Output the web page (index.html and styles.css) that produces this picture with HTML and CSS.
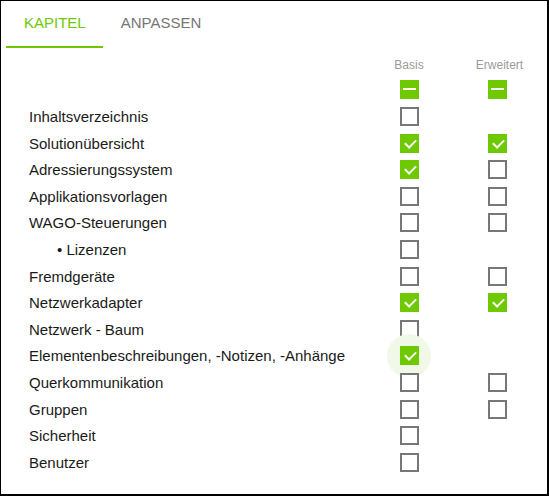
FILE: index.html
```html
<!DOCTYPE html>
<html lang="de">
<head>
    <meta charset="UTF-8">
    <title>Kapitel</title>
    <link rel="stylesheet" href="styles.css">
</head>
<body>
    <div class="frame">
        <div class="tabs">
            <div class="tab active">KAPITEL</div>
            <div class="tab">ANPASSEN</div>
        </div>

        <div class="chapters">
            <div class="row head">
                <span></span>
                <span class="col-title">Basis</span>
                <span class="col-title">Erweitert</span>
            </div>
            <div class="row">
                <span></span>
                <span class="cell"><span class="box mixed"></span></span>
                <span class="cell"><span class="box mixed"></span></span>
            </div>
            <div class="row">
                <span class="label">Inhaltsverzeichnis</span>
                <span class="cell"><span class="box"></span></span>
                <span class="cell"></span>
            </div>
            <div class="row">
                <span class="label">Solutionübersicht</span>
                <span class="cell"><span class="box on"></span></span>
                <span class="cell"><span class="box on"></span></span>
            </div>
            <div class="row">
                <span class="label">Adressierungssystem</span>
                <span class="cell"><span class="box on"></span></span>
                <span class="cell"><span class="box"></span></span>
            </div>
            <div class="row">
                <span class="label">Applikationsvorlagen</span>
                <span class="cell"><span class="box"></span></span>
                <span class="cell"><span class="box"></span></span>
            </div>
            <div class="row">
                <span class="label">WAGO-Steuerungen</span>
                <span class="cell"><span class="box"></span></span>
                <span class="cell"><span class="box"></span></span>
            </div>
            <div class="row">
                <span class="label sub">&bull; Lizenzen</span>
                <span class="cell"><span class="box"></span></span>
                <span class="cell"></span>
            </div>
            <div class="row">
                <span class="label">Fremdgeräte</span>
                <span class="cell"><span class="box"></span></span>
                <span class="cell"><span class="box"></span></span>
            </div>
            <div class="row">
                <span class="label">Netzwerkadapter</span>
                <span class="cell"><span class="box on"></span></span>
                <span class="cell"><span class="box on"></span></span>
            </div>
            <div class="row">
                <span class="label">Netzwerk - Baum</span>
                <span class="cell"><span class="box"></span></span>
                <span class="cell"></span>
            </div>
            <div class="row">
                <span class="label">Elementenbeschreibungen, -Notizen, -Anhänge</span>
                <span class="cell"><span class="ripple"></span><span class="box on"></span></span>
                <span class="cell"></span>
            </div>
            <div class="row">
                <span class="label">Querkommunikation</span>
                <span class="cell"><span class="box"></span></span>
                <span class="cell"><span class="box"></span></span>
            </div>
            <div class="row">
                <span class="label">Gruppen</span>
                <span class="cell"><span class="box"></span></span>
                <span class="cell"><span class="box"></span></span>
            </div>
            <div class="row">
                <span class="label">Sicherheit</span>
                <span class="cell"><span class="box"></span></span>
                <span class="cell"></span>
            </div>
            <div class="row">
                <span class="label">Benutzer</span>
                <span class="cell"><span class="box"></span></span>
                <span class="cell"></span>
            </div>
        </div>
    </div>
</body>
</html>
```

FILE: styles.css
```css
:root {
    --green: #6ec900;
    --grey: #777777;
}

* {
    box-sizing: border-box;
    margin: 0;
    padding: 0;
}

body {
    font-family: 'Liberation Sans', Arial, sans-serif;
    background: #ffffff;
    color: #1a1a1a;
}

.frame {
    width: 549px;
    height: 496px;
    border: 1px solid #000;
    border-right-width: 2px;
    border-bottom-width: 2px;
    padding: 0 6px 0 5px;
}

/* tabs */
.tabs {
    display: flex;
    height: 47px;
}

.tab {
    padding: 13px 17px 0 18px;
    font-size: 15px;
    color: #767676;
    height: 100%;
}

.tab.active {
    color: var(--green);
    border-bottom: 2px solid var(--green);
}

/* chapter table */
.chapters {
    padding: 2px 0 0 23px;
}

.row {
    display: grid;
    grid-template-columns: 1fr 88px 88px;
    align-items: center;
    height: 26.6px;
    font-size: 15px;
}

.row.head {
    font-size: 12px;
    color: #9a9a9a;
}

.col-title {
    text-align: center;
    padding-top: 3px;
}

.col-title:last-child {
    padding-left: 5px;
}

.label.sub {
    padding-left: 28px;
}

.cell {
    position: relative;
    display: flex;
    justify-content: center;
    align-items: center;
    height: 100%;
}

.box {
    position: relative;
    width: 19px;
    height: 19px;
    border: 2px solid var(--grey);
    background: #fff;
}

.box.on,
.box.mixed {
    border: none;
    background: var(--green);
}

.box.on::after {
    content: "";
    position: absolute;
    left: 7px;
    top: 3px;
    width: 5px;
    height: 9px;
    border: solid #fff;
    border-width: 0 2px 2px 0;
    transform: rotate(45deg);
}

.box.mixed::after {
    content: "";
    position: absolute;
    left: 3px;
    top: 8px;
    width: 13px;
    height: 2px;
    background: #fff;
}

.ripple {
    position: absolute;
    left: 50%;
    top: 50%;
    width: 44px;
    height: 44px;
    margin: -22px 0 0 -22px;
    border-radius: 50%;
    background: #f0f9e7;
}
```
